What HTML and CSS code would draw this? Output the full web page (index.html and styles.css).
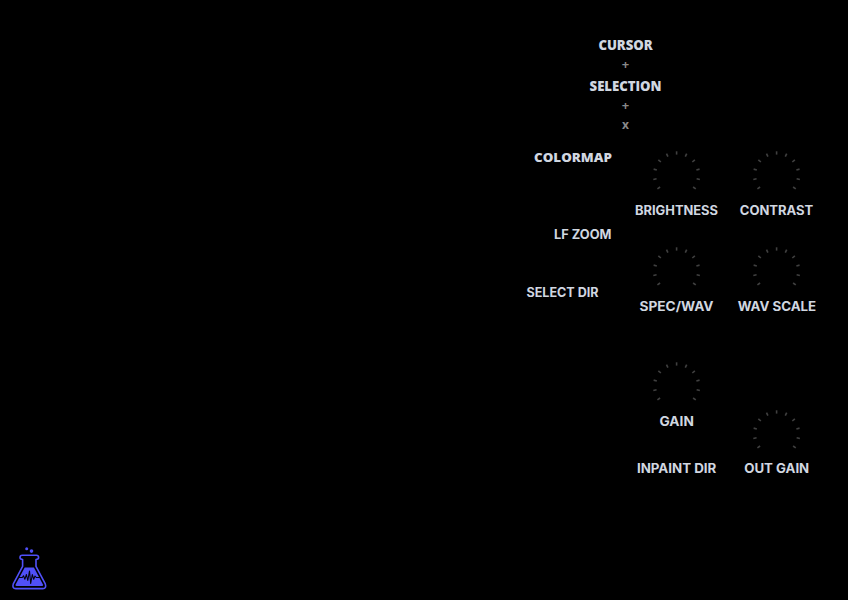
FILE: index.html
```html
<!DOCTYPE html>
<html lang="en">
<head>
<meta charset="utf-8">
<title>Spectral editor</title>
<link rel="stylesheet" href="styles.css">
</head>
<body>
<svg class="defs" width="0" height="0" aria-hidden="true">
  <symbol id="knob" viewBox="-25.6 -25 50 50">
    <g stroke="#404040" stroke-width="1.6">
      <path id="t" d="M0-23.7V-20.4"/>
      <use href="#t" transform="rotate(25.2)"/><use href="#t" transform="rotate(50.4)"/>
      <use href="#t" transform="rotate(75.6)"/><use href="#t" transform="rotate(100.8)"/>
      <use href="#t" transform="rotate(126)"/><use href="#t" transform="rotate(-25.2)"/>
      <use href="#t" transform="rotate(-50.4)"/><use href="#t" transform="rotate(-75.6)"/>
      <use href="#t" transform="rotate(-100.8)"/><use href="#t" transform="rotate(-126)"/>
    </g>
  </symbol>
</svg>
<div class="app">
  <aside class="brand">
    <svg width="36" height="44" viewBox="-0.3 0 36 44">
      <g fill="#5050f8">
        <circle cx="15.4" cy="2.8" r="1.5"/><circle cx="20.2" cy="5.1" r="1.8"/>
        <path d="M13.4 21.5H22.6L31.8 38.7Q32.1 40 30.6 40H5.4Q3.9 40 4.2 38.7Z"/>
      </g>
      <path d="M11.3 13.5Q8.7 13.4 8.7 11.5Q8.7 9.3 11 9.3H25Q27.3 9.3 27.3 11.5Q27.3 13.4 24.7 13.5V20.4L34 37.9Q35.5 42.3 31.4 42.6H4.6Q.5 42.3 2 37.9L11.3 20.4Z" fill="none" stroke="#5050f8" stroke-width="1.6" stroke-linejoin="round"/>
      <path d="M7 31.5H11L12.2 29.8L13.6 33.2L15.1 28.5L16.5 34.5L18.2 25L19.4 37.5L21 28.5L22.4 33.3L23.7 30L25 31.5H29" fill="none" stroke="#05050d" stroke-width="1.1" stroke-linejoin="round"/>
    </svg>
  </aside>
  <main class="panel">
    <section class="readout">
      <h2>CURSOR</h2><p>+</p><h2>SELECTION</h2><p>+</p><p>x</p>
    </section>
    <section class="controls">
      <div class="options">
        <svg class="label open" width="100" height="20"><text x="22" y="14.7" textLength="78" lengthAdjust="spacingAndGlyphs">COLORMAP</text></svg>
        <svg class="label zoom" width="100" height="20"><text x="42" y="14.7" textLength="57.5" lengthAdjust="spacingAndGlyphs">LF ZOOM</text></svg>
        <svg class="label direction" width="100" height="20"><text x="14.5" y="14.7" textLength="72" lengthAdjust="spacingAndGlyphs">SELECT DIR</text></svg>
      </div>
      <div class="knobs">
        <div class="control"><svg class="dial"><use href="#knob"/></svg><svg class="label" width="100" height="20"><text x="9" y="14.7" textLength="83" lengthAdjust="spacingAndGlyphs">BRIGHTNESS</text></svg></div>
        <div class="control second"><svg class="dial"><use href="#knob"/></svg><svg class="label" width="100" height="20"><text x="13.5" y="14.7" textLength="74" lengthAdjust="spacingAndGlyphs">SPEC/WAV</text></svg></div>
        <div class="control gain"><svg class="dial"><use href="#knob"/></svg><svg class="label" width="100" height="20"><text x="33.5" y="14.7" textLength="34.3" lengthAdjust="spacingAndGlyphs">GAIN</text></svg></div>
        <svg class="label inpaint" width="100" height="20"><text x="10.9" y="14.7" textLength="79.4" lengthAdjust="spacingAndGlyphs">INPAINT DIR</text></svg>
      </div>
      <div class="knobs">
        <div class="control"><svg class="dial"><use href="#knob"/></svg><svg class="label" width="100" height="20"><text x="13.8" y="14.7" textLength="73.5" lengthAdjust="spacingAndGlyphs">CONTRAST</text></svg></div>
        <div class="control second"><svg class="dial"><use href="#knob"/></svg><svg class="label" width="100" height="20"><text x="11.7" y="14.7" textLength="78.5" lengthAdjust="spacingAndGlyphs">WAV SCALE</text></svg></div>
        <div class="control output"><svg class="dial"><use href="#knob"/></svg><svg class="label" width="100" height="20"><text x="18.2" y="14.7" textLength="65" lengthAdjust="spacingAndGlyphs">OUT GAIN</text></svg></div>
      </div>
    </section>
  </main>
</div>
</body>
</html>
```
FILE: styles.css
```css
* { box-sizing: border-box; }
body { margin: 0; background: #000; overflow: hidden; }
.defs { display: block; }
.app { display: flex; width: 848px; height: 600px; }
.brand { width: 512px; display: flex; align-items: flex-end; padding: 0 0 10px 11px; }
.panel { width: 336px; padding-top: 34px; }
.readout { width: 227px; text-align: center; font-family: "Open Sans", sans-serif; }
.readout h2, .readout p { margin: 0; font-weight: 700; line-height: 20px; }
.readout h2 { font-size: 13.2px; font-weight: 800; line-height: 22px; height: 20px; color: #d1d7e0; }
.readout p { font-size: 13px; height: 21px; color: #888; }
.readout p:last-child { height: 20px; line-height: 18px; font-size: 12px; }
.readout h2 { letter-spacing: -0.05px; }
.controls { display: flex; margin-top: 14px; }
.options { width: 114px; }
.label { display: block; fill: #d1d7e0; font: 700 12.8px Inter, sans-serif; overflow: visible; }
.open { font: 800 13px "Open Sans", sans-serif; margin-top: -3px; }
.zoom { margin-top: 57px; }
.direction { margin-top: 38px; }
.knobs { width: 100px; }
.control { display: flex; flex-direction: column; align-items: center; }
.dial { width: 50px; height: 50px; }
.second { margin-top: 26px; }
.gain { margin-top: 45px; }
.inpaint { margin-top: 27px; }
.output { margin-top: 93px; }
.output .label { margin-top: -1px; }
```
